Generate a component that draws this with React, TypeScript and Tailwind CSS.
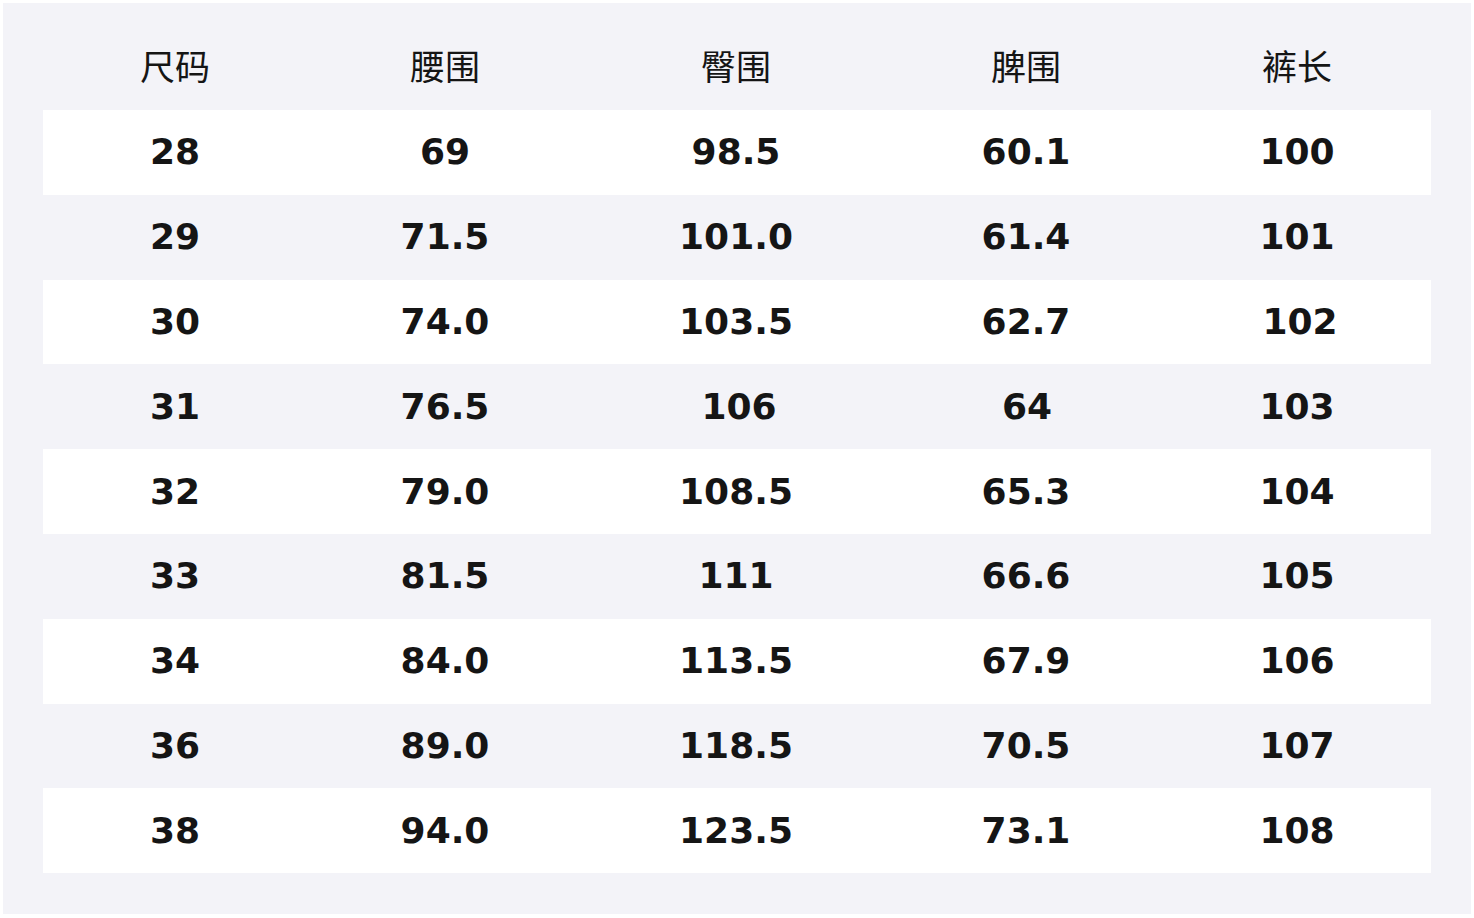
const headers = ["尺码", "腰围", "臀围", "脾围", "裤长"];

const rows: string[][] = [
  ["28", "69", "98.5", "60.1", "100"],
  ["29", "71.5", "101.0", "61.4", "101"],
  ["30", "74.0", "103.5", "62.7", "102"],
  ["31", "76.5", "106", "64", "103"],
  ["32", "79.0", "108.5", "65.3", "104"],
  ["33", "81.5", "111", "66.6", "105"],
  ["34", "84.0", "113.5", "67.9", "106"],
  ["36", "89.0", "118.5", "70.5", "107"],
  ["38", "94.0", "123.5", "73.1", "108"],
];

// a few cells in the source sit slightly off centre
const nudge: Record<string, string> = {
  "2-4": "pl-[6px]",
  "3-2": "pl-[6px]",
  "3-3": "pl-[2px]",
};

const cols = "grid grid-cols-[264px_276px_306px_274px_268px]";

export default function App() {
  return (
    <div className="w-[1474px] h-[918px] bg-white p-[3px] pr-[3px] pb-[4px]">
      <div className="h-full bg-[#f3f3f8] px-[40px] text-[#151515]">
        {/* header */}
        <div
          className={`${cols} h-[107px] items-center pt-[18px] text-[35px]`}
          style={{ fontFamily: '"Noto Sans CJK SC", "Noto Sans", sans-serif' }}
        >
          {headers.map((h) => (
            <div key={h} className="text-center">
              {h}
            </div>
          ))}
        </div>

        {/* body */}
        <div style={{ fontFamily: '"DejaVu Sans", sans-serif' }}>
          {rows.map((r, i) => (
            <div
              key={i}
              className={`${cols} h-[84.8px] items-center text-[36px] font-bold ${
                i % 2 === 0 ? "bg-white" : ""
              }`}
            >
              {r.map((v, j) => (
                <div key={j} className={`text-center ${nudge[`${i}-${j}`] ?? ""}`}>
                  {v}
                </div>
              ))}
            </div>
          ))}
        </div>
      </div>
    </div>
  );
}
